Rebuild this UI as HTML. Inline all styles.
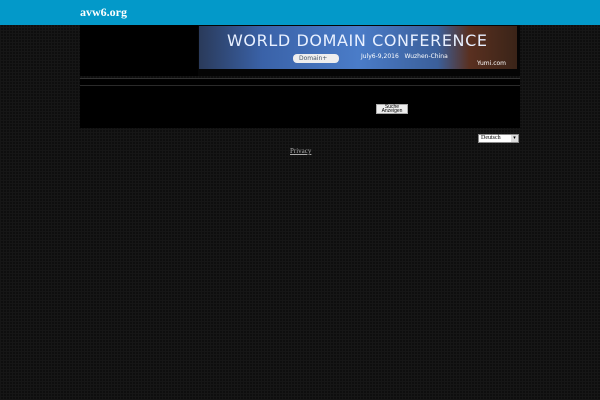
<!DOCTYPE html>
<html><head><style>
body{margin:0;width:600px;height:400px;background:#0e0e0e;background-image:repeating-linear-gradient(0deg,#161616 0 1px,transparent 1px 3px),repeating-linear-gradient(90deg,#161616 0 1px,transparent 1px 3px);position:relative;overflow:hidden;font-family:"Liberation Serif",serif}
.hd{position:absolute;left:0;top:0;width:600px;height:25px;background:#0399c9}
.hd span{position:absolute;left:80px;top:5px;color:#fff;font-weight:bold;font-size:12px}
.b{position:absolute;background:#000}
</style></head><body>
<div class="hd"><span>avw6.org</span></div>
<div class="b" style="left:80px;top:25px;width:118px;height:51px"></div>
<div class="b" style="left:198px;top:25px;width:322px;height:51px;background:#050505"></div>
<div style="position:absolute;left:199px;top:26px;width:318px;height:43px;background:linear-gradient(90deg,#2a3a5a 0%,#3a62a8 20%,#4a7cc8 50%,#3b5f9a 75%,#5a3020 85%,#3a2418 100%)">
<div style="position:absolute;left:28px;top:5px;color:#e8f0ff;font-family:'DejaVu Sans',sans-serif;font-size:16px;letter-spacing:0.6px;white-space:nowrap">WORLD DOMAIN CONFERENCE</div>
<div style="position:absolute;left:94px;top:28px;width:40px;height:9px;background:#eee;border-radius:4px;font:6px 'DejaVu Sans',sans-serif;color:#456;line-height:9px;padding-left:6px">Domain+</div>
<div style="position:absolute;left:162px;top:27px;font:6px 'DejaVu Sans',sans-serif;color:#fff;white-space:nowrap">July6-9,2016 &nbsp; Wuzhen-China</div>
<div style="position:absolute;left:278px;top:34px;font:6px 'DejaVu Sans',sans-serif;color:#fff">Yumi.com</div>
</div>
<div class="b" style="left:80px;top:78px;width:440px;height:6px;border-top:1px solid #333"></div>
<div class="b" style="left:80px;top:85px;width:440px;height:7px;border-top:1px solid #2a2a2a"></div>
<div class="b" style="left:80px;top:93px;width:440px;height:35px"></div>
<div style="position:absolute;left:376px;top:104px;width:32px;height:10px;background:#eee;border:1px solid #aaa;box-sizing:border-box;font:5px 'Liberation Sans',sans-serif;text-align:center;line-height:4px;color:#000">Suche<br>Anzeigen</div>
<div style="position:absolute;left:478px;top:134px;width:41px;height:9px;background:#fff;border:1px solid #888;box-sizing:border-box;font:6px 'Liberation Serif',serif;line-height:7px;padding-left:2px">Deutsch<span style="position:absolute;right:0;top:0;width:7px;height:7px;background:#ddd;font-size:5px;text-align:center">▾</span></div>
<div style="position:absolute;left:290px;top:147px;font-size:7px;color:#aaa;text-decoration:underline">Privacy</div>
</body></html>
